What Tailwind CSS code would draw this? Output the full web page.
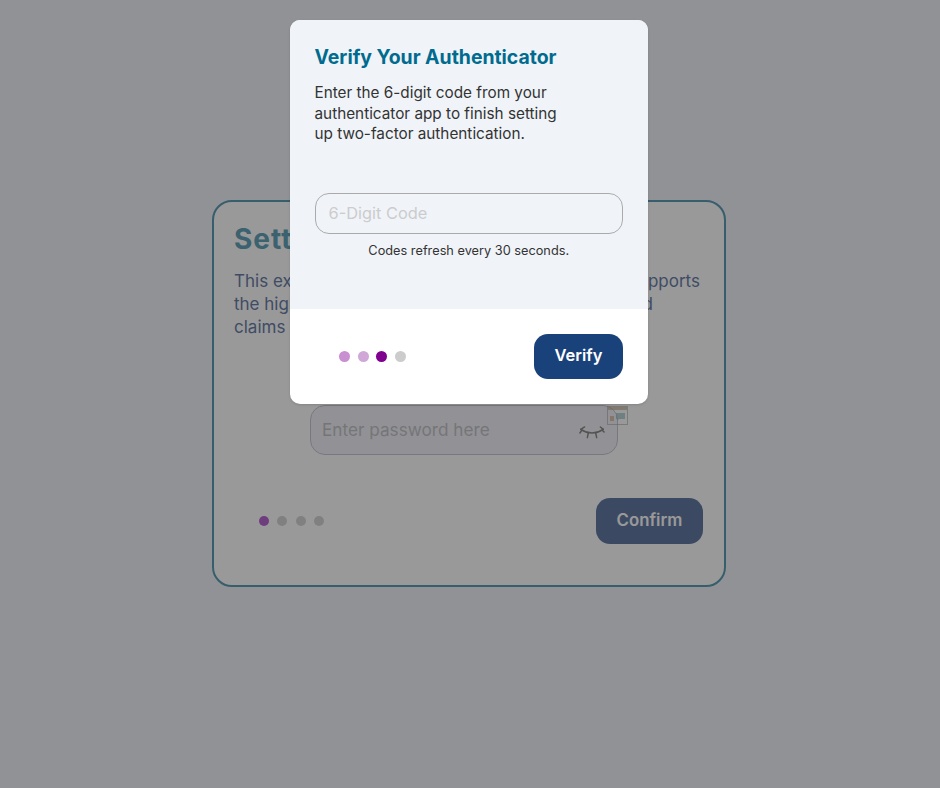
<!DOCTYPE html>
<html lang="en">
<head>
    <meta charset="UTF-8">
    <meta name="viewport" content="width=device-width, initial-scale=1.0">
    <title>Verify Your Authenticator</title>
    <script src="https://cdn.jsdelivr.net/npm/@tailwindcss/browser@4"></script>
</head>
<body class="relative h-[788px] overflow-hidden bg-[#f2f3f8] font-['Inter',sans-serif]">
    <!-- page behind the modal -->
    <main class="flex h-full items-center justify-center pr-[2px] pb-[2px]">
        <section class="h-[387px] w-[514px] rounded-[20px] border-2 border-[#5c9db5] bg-white pt-[21px] pr-[21px] pl-[20px]">
            <h1 class="text-[28px] leading-[32px] font-bold tracking-[1px] text-[#64a3ba]">Settings</h1>
            <div class="mt-[15px] text-[17px] leading-[23px] text-[#6a7fa8]">
                <p class="flex justify-between pr-[3px]"><span>This extra password</span><span>supports</span></p>
                <p class="flex justify-between pr-[50px]"><span>the highest security</span><span>d</span></p>
                <p>claims</p>
            </div>
            <div class="relative mt-[66px] ml-[76px] flex h-[50px] w-[308px] items-center justify-between rounded-[15px] border border-[#c8c8d6] bg-[#f3f4fb] pr-[12px] pl-[11px]">
                <span class="text-[17.2px] text-[#c4c4c8]">Enter password here</span>
                <svg class="mt-[7px]" width="26" height="16" viewBox="0 0 28 16" fill="none" stroke="#8a8a8a" stroke-width="1.6" stroke-linecap="round">
                    <path d="M2 4 Q14 12 26 4"/>
                    <path d="M2 4 L6 1.5M3 5 L1 8M26 4 L23 1.5M25 5 L27 7M10 8 L9 13M18 8 L19 13"/>
                </svg>
                <svg class="absolute top-[0px] right-[-11px] opacity-60" width="21" height="19" viewBox="0 0 21 19" fill="none">
                    <rect x="0.5" y="0.5" width="20" height="18" stroke="#aaa"/>
                    <rect x="1" y="1" width="19" height="3" fill="#c4a98c"/>
                    <rect x="3" y="10" width="4" height="5" fill="#d0a67c"/>
                    <path d="M9 7h9v6h-6l-2 2v-2H9z" fill="#8fbcc0"/>
                </svg>
            </div>
            <div class="mt-[43px] flex items-center justify-between pl-[25px]">
                <div class="flex gap-[8.3px]">
                    <span class="size-[10px] rounded-full bg-[#b866d0]"></span>
                    <span class="size-[10px] rounded-full bg-[#d6d6d6]"></span>
                    <span class="size-[10px] rounded-full bg-[#d6d6d6]"></span>
                    <span class="size-[10px] rounded-full bg-[#d6d6d6]"></span>
                </div>
                <button class="h-[46px] w-[107px] rounded-[14px] bg-[#647ba5] text-[16.8px] font-semibold text-white">Confirm</button>
            </div>
        </section>
    </main>

    <!-- overlay -->
    <div class="absolute inset-0 bg-black/40"></div>

    <!-- modal -->
    <div class="absolute top-[20px] left-[290px] w-[358px] overflow-hidden rounded-[10px] bg-white shadow-sm">
        <div class="h-[289px] bg-[#f0f4f9] pt-[25px] pl-[24.5px]">
            <h2 class="text-[19.4px] leading-[24px] font-bold text-[#006b8f]">Verify Your Authenticator</h2>
            <p class="mt-[14px] w-[260px] text-[15.3px] leading-[20.5px] text-[#333]">Enter the 6-digit code from your authenticator app to finish setting up two-factor authentication.</p>
            <div class="mt-[48px] flex h-[41px] w-[308.5px] items-center rounded-[14px] border border-[#aaa] px-[13px] pt-[1px] text-[16.4px] text-[#ccc]">6-Digit Code</div>
            <p class="mt-[8px] w-[308.5px] text-center text-[12.75px] leading-[17px] text-[#333]">Codes refresh every 30 seconds.</p>
        </div>
        <div class="flex h-[95px] items-center justify-between pr-[25px] pl-[49px]">
            <div class="flex gap-[7.5px]">
                <span class="size-[11px] rounded-full bg-[#c890d0]"></span>
                <span class="size-[11px] rounded-full bg-[#d0a8d8]"></span>
                <span class="size-[11px] rounded-full bg-[#800090]"></span>
                <span class="size-[11px] rounded-full bg-[#ccc]"></span>
            </div>
            <button class="h-[45px] w-[89px] rounded-[14px] bg-[#19417a] pb-[2px] text-[16.5px] font-semibold text-white">Verify</button>
        </div>
    </div>
</body>
</html>
